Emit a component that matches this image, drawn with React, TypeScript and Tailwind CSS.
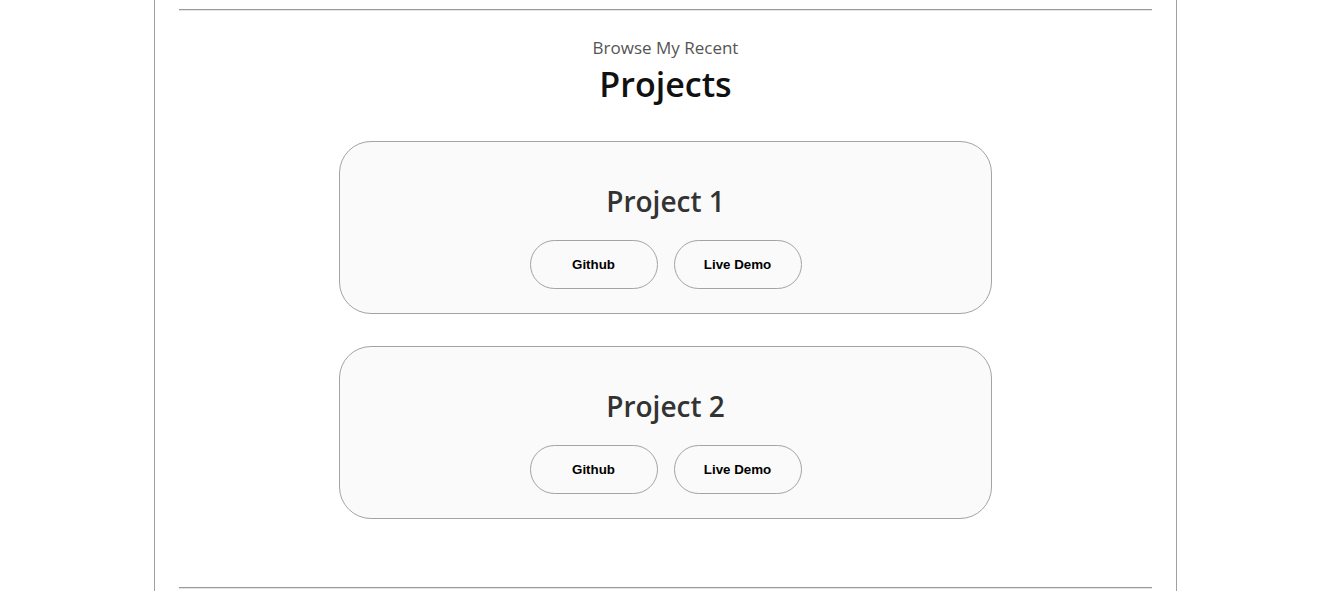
const projects = ["Project 1", "Project 2"]

function Rule() {
  return <hr className="h-0 border-t border-b border-t-[#9a9a9a] border-b-[#e4e4e4]" />
}

function ProjectCard({ title }: { title: string }) {
  return (
    <div className="w-[653px] rounded-[32px] border border-[#a3a3a3] bg-[#fafafa] pt-[39px] pb-[24px] text-center">
      <h2 className="mb-[19px] text-[28px] leading-[40px] font-semibold text-[#333]">{title}</h2>
      <div className="flex justify-center gap-4">
        <button className="h-[49px] w-[128px] rounded-full border border-[#a3a3a3] bg-transparent font-['Liberation_Sans',Arial,sans-serif] text-[13.33px] font-bold text-black">
          Github
        </button>
        <button className="h-[49px] w-[128px] rounded-full border border-[#a3a3a3] bg-transparent font-['Liberation_Sans',Arial,sans-serif] text-[13.33px] font-bold text-black">
          Live Demo
        </button>
      </div>
    </div>
  )
}

export default function App() {
  return (
    <div className="min-h-[591px] bg-white font-['Open_Sans',sans-serif]">
      <div className="ml-[154px] h-[591px] w-[1023px] overflow-hidden border-x border-[#a0a0a0] px-6 pt-[9px]">
        <Rule />
        <section className="flex flex-col items-center pt-[25px]">
          <p className="text-[17px] leading-[24px] text-[#555]">Browse My Recent</p>
          <h1 className="text-[34px] leading-[48px] font-semibold text-[#111]">Projects</h1>
          <div className="mt-[33px] flex flex-col gap-8">
            {projects.map((p) => (
              <ProjectCard key={p} title={p} />
            ))}
          </div>
        </section>
        <div className="mt-[68px]">
          <Rule />
        </div>
      </div>
    </div>
  )
}
